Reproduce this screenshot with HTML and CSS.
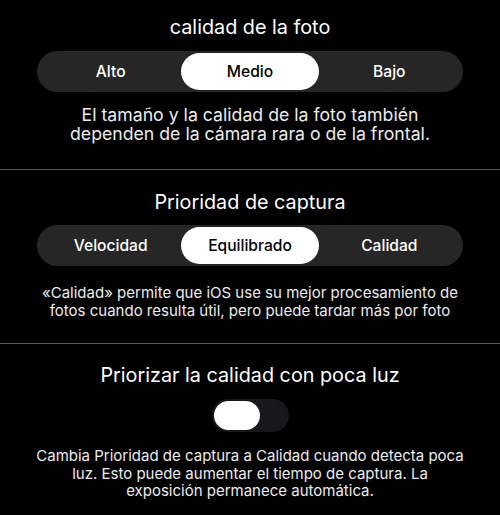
FILE: index.html
```html
<!DOCTYPE html>
<html lang="es">
<head>
<meta charset="utf-8">
<link rel="stylesheet" href="styles.css">
</head>
<body>
<div class="page">
  <section class="section s1">
    <h2 class="title">calidad de la foto</h2>
    <div class="seg">
      <div class="opt">Alto</div>
      <div class="opt sel">Medio</div>
      <div class="opt">Bajo</div>
    </div>
    <p class="desc big">El tamaño y la calidad de la foto también<br>dependen de la cámara rara o de la frontal.</p>
  </section>
  <div class="divider"></div>
  <section class="section s2">
    <h2 class="title">Prioridad de captura</h2>
    <div class="seg">
      <div class="opt">Velocidad</div>
      <div class="opt sel">Equilibrado</div>
      <div class="opt">Calidad</div>
    </div>
    <p class="desc">«Calidad» permite que iOS use su mejor procesamiento de<br>fotos cuando resulta útil, pero puede tardar más por foto</p>
  </section>
  <div class="divider"></div>
  <section class="section s3">
    <h2 class="title t3">Priorizar la calidad con poca luz</h2>
    <div class="toggle"><div class="knob"></div></div>
    <p class="desc">Cambia Prioridad de captura a Calidad cuando detecta poca<br>luz. Esto puede aumentar el tiempo de captura. La<br>exposición permanece automática.</p>
  </section>
</div>
</body>
</html>
```
FILE: styles.css
```css
html, body {
  margin: 0;
  padding: 0;
  background: #000;
}
body {
  width: 500px;
  height: 515px;
  overflow: hidden;
  font-family: Inter, "Liberation Sans", Arial, sans-serif;
  color: #fff;
}
.page {
  display: flex;
  flex-direction: column;
}
.section {
  display: flex;
  flex-direction: column;
  align-items: center;
}
.s1 { padding: 15px 0 26px; }
.s2 { padding: 20px 0 24px; }
.s3 { padding: 19px 0 0; }
.title {
  margin: 0;
  font-size: 19.8px;
  line-height: 24px;
  font-weight: 400;
  text-align: center;
}
.t3 {
  line-height: 25px;
}
.seg {
  margin-top: 12px;
  width: 426px;
  height: 41px;
  box-sizing: border-box;
  padding: 2px 4px;
  border-radius: 21px;
  background: #262626;
  display: grid;
  grid-template-columns: 1fr 1fr 1fr;
}
.s2 .seg { margin-top: 11px; }
.opt {
  display: flex;
  align-items: center;
  justify-content: center;
  font-size: 15.6px;
  font-weight: 500;
  color: #fff;
  border-radius: 19px;
  margin: 0 1px;
}
.opt.sel {
  background: #fff;
  color: #000;
}
.desc {
  margin: 18px 0 0;
  font-size: 15px;
  line-height: 17.5px;
  text-align: center;
  color: #ececec;
}
.desc.big {
  margin-top: 13px;
  font-size: 17.7px;
  line-height: 19px;
}
.divider {
  height: 1px;
  background: #5a5a5a;
}
.toggle {
  margin-top: 11px;
  width: 77px;
  height: 33px;
  box-sizing: border-box;
  padding: 2px;
  border-radius: 17px;
  background: #18181a;
  display: flex;
  align-items: center;
}
.knob {
  width: 46px;
  height: 29px;
  border-radius: 15px;
  background: #fff;
}
.s3 .desc {
  margin-top: 15px;
  line-height: 17.6px;
}
```
